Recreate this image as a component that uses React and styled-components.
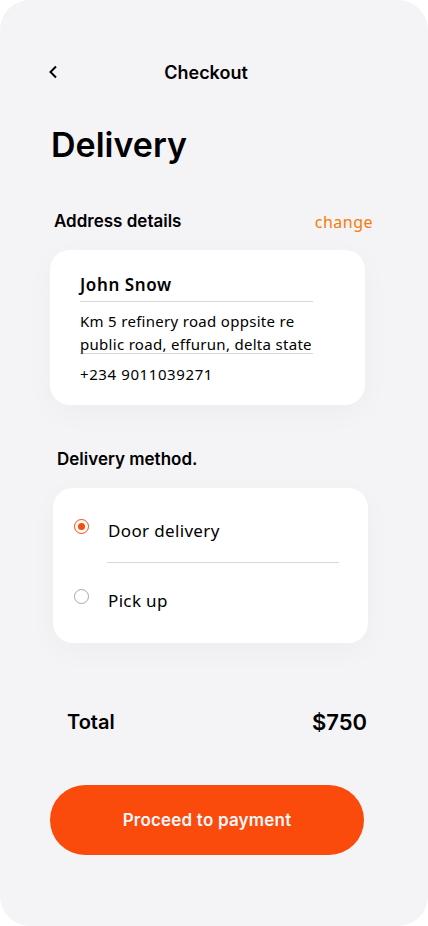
import React, { useState } from "react";
import styled, { createGlobalStyle } from "styled-components";

const GlobalStyle = createGlobalStyle`
    * { box-sizing: border-box; }
    body {
        margin: 0;
        background: #ffffff;
        font-family: Inter, "Liberation Sans", sans-serif;
        color: #000;
    }
`;

const Screen = styled.div`
    width: 428px;
    height: 926px;
    background: #f4f4f6;
    border-radius: 30px;
    padding: 60px 0 0;
    display: flex;
    flex-direction: column;
`;

const TopBar = styled.div`
    position: relative;
    height: 24px;
    display: flex;
    align-items: center;
    justify-content: center;

    button {
        position: absolute;
        left: 44px;
        top: 2px;
        border: none;
        background: none;
        padding: 0;
        width: 20px;
        height: 20px;
        display: flex;
        align-items: center;
        justify-content: center;
        cursor: pointer;
    }

    h1 {
        margin: 0 0 0 -16px;
        font-size: 18px;
        font-weight: 600;
    }
`;

const PageTitle = styled.h2`
    margin: 41px 0 0 51px;
    font-size: 34px;
    font-weight: 600;
    line-height: 40px;
`;

const SectionHead = styled.div`
    display: flex;
    justify-content: space-between;
    align-items: center;
    margin: ${(p) => p.$margin};

    h3 {
        margin: 0;
        font-size: 17px;
        font-weight: 600;
    }

    a {
        font-family: "Noto Sans", sans-serif;
        font-size: 16px;
        letter-spacing: 0.5px;
        color: #f47b0a;
        text-decoration: none;
        margin-top: 2px;
    }
`;

const Card = styled.div`
    background: #ffffff;
    border-radius: 20px;
    box-shadow: 0 8px 30px rgba(0, 0, 0, 0.03);
    margin: ${(p) => p.$margin};
    width: 315px;
    height: 155px;
    font-family: "Noto Sans", sans-serif;
    letter-spacing: 0.35px;
`;

const Address = styled.div`
    padding: 23px 52px 0 30px;

    .name {
        font-size: 17px;
        font-weight: 600;
        letter-spacing: 0.6px;
        line-height: 24px;
        height: 29px;
        border-bottom: 1px solid #d8d8d8;
    }

    .street {
        font-size: 15px;
        line-height: 23px;
        height: 52px;
        padding-top: 8px;
        white-space: nowrap;
        letter-spacing: 0.3px;
        border-bottom: 1px solid #d8d8d8;
    }

    .phone {
        font-size: 15px;
        line-height: 22px;
        padding-top: 9px;
        letter-spacing: 0.6px;
    }
`;

const Methods = styled.div`
    padding: 31px 29px 0 21px;
`;

const MethodRow = styled.div`
    display: flex;
    align-items: flex-start;
    cursor: pointer;
    height: ${(p) => (p.$first ? "43px" : "auto")};
    padding-top: ${(p) => (p.$first ? "0" : "26px")};
`;

const MethodLabel = styled.span`
    font-size: 17px;
    line-height: 24px;
    margin-left: 19px;
`;

const Radio = styled.span`
    width: 15px;
    height: 15px;
    border-radius: 50%;
    border: ${(p) => (p.$on ? "1.5px solid #fa4a0c" : "1px solid #a8a8a8")};
    display: flex;
    align-items: center;
    justify-content: center;
    flex: none;

    &::after {
        content: "";
        width: 7px;
        height: 7px;
        border-radius: 50%;
        background: ${(p) => (p.$on ? "#fa4a0c" : "transparent")};
    }
`;

const Divider = styled.div`
    height: 1px;
    background: #d8d8d8;
    margin-left: 33px;
`;

const TotalRow = styled.div`
    display: flex;
    justify-content: space-between;
    align-items: center;
    margin: 66px 61px 0 67px;

    .label {
        font-size: 20px;
        font-weight: 600;
    }

    .price {
        font-size: 22px;
        font-weight: 600;
    }
`;

const PayButton = styled.button`
    margin: 50px 0 0 50px;
    width: 314px;
    height: 70px;
    border: none;
    border-radius: 35px;
    background: #fa4a0c;
    color: #f6f6f9;
    font-family: Inter, "Liberation Sans", sans-serif;
    font-size: 17px;
    font-weight: 600;
    letter-spacing: 0.2px;
    padding-left: 6px;
    cursor: pointer;
`;

function App() {
    const [method, setMethod] = useState("door");

    return (
        <>
            <GlobalStyle />
            <Screen>
                <TopBar>
                    <button aria-label="back">
                        <svg width="12" height="14" viewBox="0 0 12 14" fill="none">
                            <path d="M8 1.5L2.5 7L8 12.5" stroke="#000" strokeWidth="2" />
                        </svg>
                    </button>
                    <h1>Checkout</h1>
                </TopBar>

                <PageTitle>Delivery</PageTitle>

                <SectionHead $margin="44px 55px 0 54px">
                    <h3>Address details</h3>
                    <a href="#change">change</a>
                </SectionHead>

                <Card $margin="17px 0 0 50px">
                    <Address>
                        <div className="name">John Snow</div>
                        <div className="street">
                            Km 5 refinery road oppsite re
                            <br />
                            public road, effurun, delta state
                        </div>
                        <div className="phone">+234 9011039271</div>
                    </Address>
                </Card>

                <SectionHead $margin="44px 0 0 57px">
                    <h3>Delivery method.</h3>
                </SectionHead>

                <Card $margin="19px 0 0 53px">
                    <Methods>
                        <MethodRow $first onClick={() => setMethod("door")}>
                            <Radio $on={method === "door"} />
                            <MethodLabel>Door delivery</MethodLabel>
                        </MethodRow>
                        <Divider />
                        <MethodRow onClick={() => setMethod("pickup")}>
                            <Radio $on={method === "pickup"} />
                            <MethodLabel>Pick up</MethodLabel>
                        </MethodRow>
                    </Methods>
                </Card>

                <TotalRow>
                    <span className="label">Total</span>
                    <span className="price">$750</span>
                </TotalRow>

                <PayButton>Proceed to payment</PayButton>
            </Screen>
        </>
    );
}

export default App;
